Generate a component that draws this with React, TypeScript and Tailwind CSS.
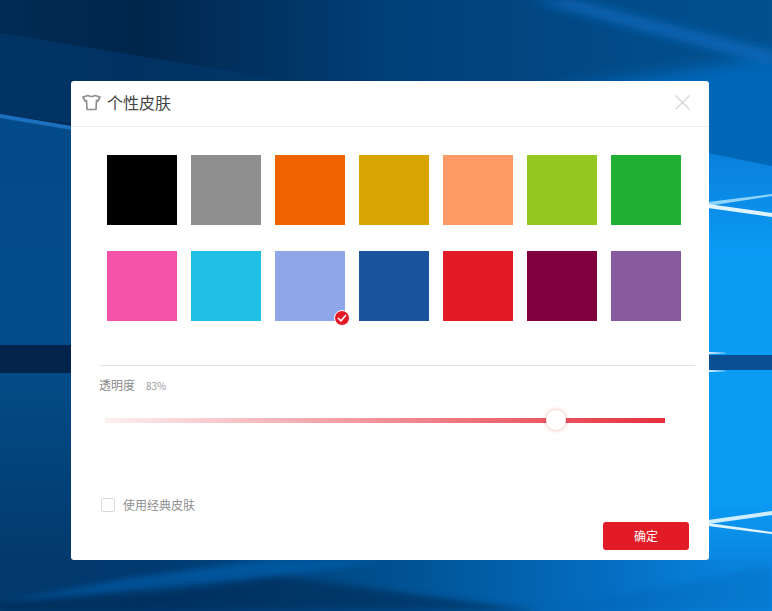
const row1 = ["#000000", "#8f8f8f", "#f06400", "#d8a505", "#ff9a66", "#94c71f", "#22b034"];
const row2 = ["#f553a9", "#20bfe5", "#8fa6e8", "#1a54a0", "#e31b27", "#80003f", "#8a5aa0"];
const font = "font-['Noto_Sans_CJK_SC','Liberation_Sans',sans-serif]";

function Wallpaper() {
  return (
    <svg className="absolute inset-0" width="772" height="611" viewBox="0 0 772 611">
      <defs>
        <linearGradient id="top" x1="0" y1="0" x2="1" y2="0">
          <stop offset="0" stopColor="#012b55" />
          <stop offset="0.18" stopColor="#01264c" />
          <stop offset="0.5" stopColor="#013f78" />
          <stop offset="0.8" stopColor="#024b88" />
          <stop offset="1" stopColor="#03508f" />
        </linearGradient>
        <linearGradient id="left" x1="0" y1="0" x2="0" y2="1">
          <stop offset="0" stopColor="#034b88" />
          <stop offset="0.55" stopColor="#034d8a" />
          <stop offset="1" stopColor="#033a6c" />
        </linearGradient>
        <linearGradient id="right" x1="0" y1="0" x2="0" y2="1">
          <stop offset="0" stopColor="#0a7fdc" />
          <stop offset="0.25" stopColor="#0a9bf5" />
          <stop offset="0.85" stopColor="#0a9bf5" />
          <stop offset="1" stopColor="#0a86e0" />
        </linearGradient>
        <linearGradient id="bottom" x1="0" y1="0" x2="1" y2="0">
          <stop offset="0" stopColor="#033a6c" />
          <stop offset="0.2" stopColor="#013a70" />
          <stop offset="0.5" stopColor="#00508f" />
          <stop offset="0.8" stopColor="#056fc4" />
          <stop offset="0.92" stopColor="#0880d8" />
          <stop offset="1" stopColor="#0a86e0" />
        </linearGradient>
        <linearGradient id="fadeL" x1="0" y1="0" x2="1" y2="0">
          <stop offset="0" stopColor="#e6f6ff" />
          <stop offset="1" stopColor="#e6f6ff" stopOpacity="0.15" />
        </linearGradient>
        <filter id="blur8"><feGaussianBlur stdDeviation="8" /></filter>
        <filter id="blur5"><feGaussianBlur stdDeviation="5" /></filter>
        <filter id="blur3"><feGaussianBlur stdDeviation="3" /></filter>
        <filter id="blur1"><feGaussianBlur stdDeviation="0.7" /></filter>
      </defs>
      <rect width="772" height="611" fill="url(#top)" />
      <path d="M0 33 L290 81 L290 150 L0 115 Z" fill="#02386c" opacity="0.7" />
      <path d="M0 115 L72 128 L72 560 L0 560 Z" fill="url(#left)" />
      <path d="M0 114 L72 126 L72 130 L0 118 Z" fill="#1a6fc0" filter="url(#blur1)" />
      <path d="M0 345 H72 V373 H0 Z" fill="#02234a" />

      <path d="M560 90 L810 50 V180 H560 Z" fill="#0666b8" filter="url(#blur8)" />
      <path d="M530 0 L575 0 L772 50 L772 66 Z" fill="#0a69bc" opacity="0.8" filter="url(#blur5)" />
      <path d="M708 153 L772 166 V560 H708 Z" fill="url(#right)" />
      <path d="M708 355 H772 V370 H708 Z" fill="#0a4f92" />
      <path d="M708 352 H726 V354 H708 Z M708 370 H726 V372 H708 Z" fill="url(#fadeL)" />
      <path d="M708 202 L772 194 V196 L708 206 Z" fill="#8fd4fb" filter="url(#blur1)" />
      <path d="M708 204 L772 213 V217 L708 208 Z" fill="#dff3ff" filter="url(#blur1)" />
      <path d="M708 520 L772 511 V515 L708 524 Z" fill="#cdeeff" filter="url(#blur1)" />
      <path d="M708 523 L772 532 V534 L708 526 Z" fill="#dff3ff" filter="url(#blur1)" />

      <rect y="560" width="772" height="51" fill="url(#bottom)" />
      <path d="M0 603 L130 578 L270 559 L390 560 L180 592 Z" fill="#0463b3" opacity="0.6" filter="url(#blur3)" />
      <path d="M0 611 V602 L280 576 L540 611 Z" fill="#012b55" opacity="0.6" filter="url(#blur3)" />
      <path d="M772 565 L542 611 H772 Z" fill="#0560b0" opacity="0.3" filter="url(#blur3)" />
    </svg>
  );
}

function Swatch({ color, selected }: { color: string; selected?: boolean }) {
  return (
    <div className="relative h-[70px] w-[70px]" style={{ backgroundColor: color }}>
      {selected && (
        <span className="absolute left-[59px] top-[59px] flex h-4 w-4 items-center justify-center rounded-full border border-white bg-[#e31b27]">
          <svg width="10" height="8" viewBox="0 0 10 8" fill="none" stroke="white" strokeWidth="1.6">
            <path d="M1 4 L4 6.8 L9 1" />
          </svg>
        </span>
      )}
    </div>
  );
}

export default function App() {
  return (
    <div className={`relative h-[611px] w-[772px] overflow-hidden ${font}`}>
      <Wallpaper />
      <div className="absolute left-[71px] top-[81px] flex h-[479px] w-[638px] flex-col rounded-[3px] bg-white">
        <header className="flex h-[46px] shrink-0 items-center border-b border-[#ebebeb] pb-[3px] pl-[11px] pr-[19px]">
          <svg width="19" height="17" viewBox="0 0 19 17" fill="none" stroke="#8e8e8e" strokeWidth="1.7" strokeLinejoin="round">
            <path d="M6 1.5 Q9.5 3.5 13 1.5 L18 3 L16 7 L14.5 6.5 L14 15.5 L5 15.5 L4.5 6.5 L3 7 L1 3 Z" />
          </svg>
          <h1 className="ml-[6px] text-[16px] leading-none text-[#444444]">个性皮肤</h1>
          <svg className="ml-auto" width="15" height="15" viewBox="0 0 15 15" stroke="#d4d4d4" strokeWidth="1.2">
            <path d="M0.5 0.5 L14.5 14.5 M14.5 0.5 L0.5 14.5" />
          </svg>
        </header>

        <div className="ml-[36px] mt-[28px] flex flex-col gap-[26px]">
          <div className="flex gap-[14px]">
            {row1.map((c) => <Swatch key={c} color={c} />)}
          </div>
          <div className="flex gap-[14px]">
            {row2.map((c) => <Swatch key={c} color={c} selected={c === "#8fa6e8"} />)}
          </div>
        </div>

        <div className="ml-[29px] mr-[14px] mt-[44px] h-px bg-[#e3e3e3]" />

        <div className="ml-[28px] mt-[10px] flex items-baseline">
          <span className="text-[12px] leading-[18px] text-[#8a8a8a]">透明度</span>
          <span className="ml-[11px] text-[10px] text-[#999999]">83%</span>
        </div>

        <div className="relative ml-[34px] mt-[24px] h-[5px] w-[560px] bg-[linear-gradient(90deg,#fdf0f1,#e52f3c)]">
          <span className="absolute left-[441px] top-[-8px] h-5 w-5 rounded-full bg-white shadow-[0_0_5px_rgba(229,28,39,0.35)]" />
        </div>

        <div className="ml-[30px] mt-[73px] flex items-center">
          <span className="h-[14px] w-[14px] rounded-[2px] border border-[#d9d9d9]" />
          <span className="ml-[8px] text-[12px] leading-[18px] text-[#8f8f8f]">使用经典皮肤</span>
        </div>

        <button className="ml-[532px] mt-[8px] h-[28px] w-[86px] rounded-[3px] bg-[#e31b27] text-[12px] text-white">确定</button>
      </div>
    </div>
  );
}
